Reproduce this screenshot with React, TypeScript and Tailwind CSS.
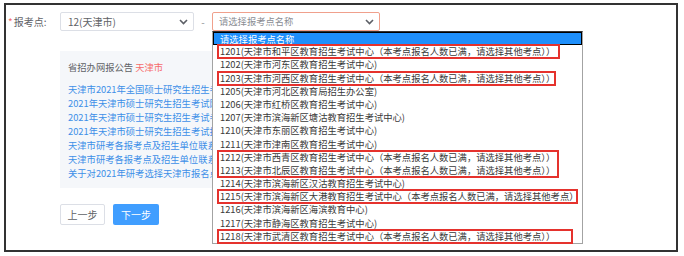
import { FC } from "react";

const FULL = "（本考点报名人数已满，请选择其他考点））";

type Group = { rows: string[]; box?: string };

const groups: Group[] = [
  { rows: ["1201(天津市和平区教育招生考试中心" + FULL], box: "w-[341px]" },
  { rows: ["1202(天津市河东区教育招生考试中心)"] },
  { rows: ["1203(天津市河西区教育招生考试中心" + FULL], box: "w-[337px]" },
  {
    rows: [
      "1205(天津市河北区教育局招生办公室)",
      "1206(天津市红桥区教育招生考试中心)",
      "1207(天津市滨海新区塘沽教育招生考试中心)",
      "1210(天津市东丽区教育招生考试中心)",
      "1211(天津市津南区教育招生考试中心)",
    ],
  },
  {
    rows: [
      "1212(天津市西青区教育招生考试中心" + FULL,
      "1213(天津市北辰区教育招生考试中心" + FULL,
    ],
    box: "w-[340px]",
  },
  { rows: ["1214(天津市滨海新区汉沽教育招生考试中心)"] },
  {
    rows: ["1215(天津市滨海新区大港教育招生考试中心（本考点报名人数已满，请选择其他考点）"],
    box: "w-[359px]",
  },
  {
    rows: [
      "1216(天津市滨海新区海滨教育中心)",
      "1217(天津市静海区教育招生考试中心)",
    ],
  },
  { rows: ["1218(天津市武清区教育招生考试中心" + FULL], box: "w-[354px]" },
];

const links = [
  "天津市2021年全国硕士研究生招生考试网上报名公告",
  "2021年天津市硕士研究生招生考试网上确认公告",
  "2021年天津市硕士研究生招生考试考生防疫须知",
  "2021年天津市硕士研究生招生考试报考须知",
  "天津市研考各报考点及招生单位联系方式",
  "天津市研考各报考点及招生单位联系方式（二）",
  "关于对2021年研考选择天津市报名点的说明",
];

const Chevron: FC = () => (
  <svg width="9" height="6" viewBox="0 0 9 6" className="shrink-0">
    <polyline
      points="1,1 4.5,4.5 8,1"
      fill="none"
      stroke="#5c5f66"
      strokeWidth="1.6"
    />
  </svg>
);

const Row: FC<{ text: string }> = ({ text }) => (
  <div className="h-[13.2px] leading-[13.2px] whitespace-nowrap text-[9.3px] text-[#3a3a3a]">
    {text}
  </div>
);

const App: FC = () => {
  return (
    <div className="w-[684px] h-[256px] bg-white pt-[3px] pl-[4px] font-['Noto_Sans_CJK_SC',sans-serif]">
      <div className="w-[674px] h-[249px] border-2 border-[#333] pt-[7px] overflow-hidden">
        {/* select row */}
        <div className="flex items-center h-[19px]">
          <div className="w-[54px] pl-[2px] flex items-center text-[10px] text-[#606266]">
            <span className="text-[#f56c6c] mr-[1px]">*</span>
            <span>报考点:</span>
          </div>
          <div className="w-[134px] h-[19px] border border-[#dcdfe6] rounded-[2px] flex items-center justify-between pl-[7px] pr-[5px] text-[10px] text-[#606266]">
            <span>12(天津市)</span>
            <Chevron />
          </div>
          <div className="w-[18px] text-center text-[10px] text-[#909399]">-</div>
          <div className="relative">
            <div className="w-[168px] h-[19px] border border-[#f0a08c] rounded-[2px] flex items-center justify-between pl-[6px] pr-[5px] text-[9.3px] text-[#8a8d93]">
              <span>请选择报考点名称</span>
              <Chevron />
            </div>
            {/* open native listbox */}
            <div className="absolute top-full left-0 z-10 w-[371px] bg-white border border-[#a3a3a3] border-t-[#333]">
              <div className="h-[13.2px] leading-[12px] border border-black bg-[#1e8ffb] text-white text-[9.3px] pl-[6px]">
                请选择报考点名称
              </div>
              {groups.map((g, i) =>
                g.box ? (
                  <div
                    key={i}
                    className={`${g.box} ml-[5px] pl-[2px] outline-2 outline-solid outline-[#e5322d] -outline-offset-1`}
                  >
                    {g.rows.map((r) => (
                      <Row key={r} text={r} />
                    ))}
                  </div>
                ) : (
                  <div key={i} className="pl-[7px]">
                    {g.rows.map((r) => (
                      <Row key={r} text={r} />
                    ))}
                  </div>
                )
              )}
            </div>
          </div>
        </div>

        {/* notice panel */}
        <div className="ml-[54px] mt-[20px] w-[400px] bg-[#f5f7fa] pt-[9px] pb-[8px] pl-[8px]">
          <div className="h-[14px] leading-[14px] text-[9.3px] text-[#606266]">
            省招办网报公告 <span className="text-[#f56c6c]">天津市</span>
          </div>
          <div className="mt-[8px] flex flex-col">
            {links.map((l) => (
              <a
                key={l}
                className="block w-[144px] overflow-hidden h-[14px] leading-[14px] whitespace-nowrap text-[9.3px] text-[#3d8fe8]"
              >
                {l}
              </a>
            ))}
          </div>
        </div>

        {/* buttons */}
        <div className="ml-[54px] mt-[16px] flex gap-[8px]">
          <button className="w-[45px] h-[21px] border border-[#dcdfe6] rounded-[2px] bg-white text-[10px] text-[#606266]">
            上一步
          </button>
          <button className="w-[46px] h-[21px] rounded-[2px] bg-[#409eff] text-[10px] text-white">
            下一步
          </button>
        </div>
      </div>
    </div>
  );
};

export default App;
